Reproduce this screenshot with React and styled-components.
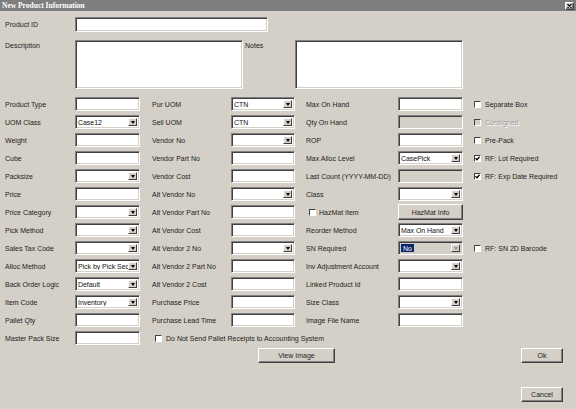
import styled, { createGlobalStyle, css } from 'styled-components'

const GlobalStyle = createGlobalStyle`
  html, body {
    margin: 0;
    background: #d4d0c8;
  }
  body {
    font-family: "Liberation Sans", Arial, sans-serif;
  }
`

const sunken = css`
  box-sizing: border-box;
  border: 1px solid;
  border-color: #808080 #ffffff #ffffff #808080;
  box-shadow: inset 1px 1px 0 #404040, inset -1px -1px 0 #d4d0c8;
`

const raised = css`
  box-sizing: border-box;
  border: 1px solid;
  border-color: #ffffff #404040 #404040 #ffffff;
  box-shadow: inset -1px -1px 0 #808080;
  background: #d4d0c8;
`

const Window = styled.div`
  width: 576px;
  height: 409px;
  background: #d4d0c8;
  overflow: hidden;
  display: flex;
  flex-direction: column;
`

const TitleBar = styled.div`
  height: 11px;
  flex-shrink: 0;
  background: #7e7e7e;
  display: flex;
  align-items: center;
  padding-left: 2px;
`

const Title = styled.span`
  font-family: "Liberation Serif", "Times New Roman", serif;
  font-weight: bold;
  font-size: 7.5px;
  line-height: 11px;
  color: #ffffff;
`

const CloseBtn = styled.div`
  ${raised};
  margin-left: auto;
  margin-right: 2px;
  width: 9px;
  height: 8px;
  display: flex;
  align-items: center;
  justify-content: center;
`

const Body = styled.div`
  padding: 6px 0 0 5px;
  font-size: 7px;
  color: #1c1c1c;
`

const Row = styled.div`
  display: flex;
  align-items: ${p => p.$top ? 'flex-start' : 'center'};
  margin-top: ${p => p.$mt || 0}px;
`

const Label = styled.div`
  width: ${p => p.$w}px;
  padding-left: ${p => p.$pad || 0}px;
  padding-top: ${p => p.$pt || 0}px;
  box-sizing: border-box;
  white-space: nowrap;
`

const TextBox = styled.input`
  ${sunken};
  width: ${p => p.$w ? p.$w + 'px' : '100%'};
  height: ${p => p.$h || 14}px;
  margin: 0;
  padding: 0 2px;
  background: ${p => p.disabled ? '#d4d0c8' : '#ffffff'};
  font: 7px "Liberation Sans", Arial, sans-serif;
  outline: none;
`

const TextArea = styled.textarea`
  ${sunken};
  width: 168px;
  height: 49px;
  margin: 0;
  padding: 2px;
  resize: none;
  background: #ffffff;
  font: 7px "Liberation Sans", Arial, sans-serif;
  outline: none;
`

const Combo = styled.div`
  ${sunken};
  width: 100%;
  height: 14px;
  padding: 2px 2px 2px 1px;
  display: flex;
  align-items: stretch;
  background: ${p => p.$disabled ? '#d4d0c8' : '#ffffff'};
`

const ComboText = styled.div`
  flex: 1;
  overflow: hidden;
  white-space: nowrap;
  line-height: 10px;
  padding-left: 1px;
  letter-spacing: -0.05px;
  color: #111;
`

const Selected = styled.span`
  background: #0a246a;
  color: #ffffff;
  padding: 0 2px;
  display: inline-block;
`

const ComboArrow = styled.div`
  box-sizing: border-box;
  border: 1px solid;
  border-color: #ffffff #404040 #404040 #ffffff;
  background: #d4d0c8;
  width: 9px;
  flex-shrink: 0;
  display: flex;
  align-items: center;
  justify-content: center;
`

const Triangle = styled.span`
  width: 0;
  height: 0;
  border-left: 2.5px solid transparent;
  border-right: 2.5px solid transparent;
  border-top: 3px solid ${p => p.$disabled ? '#909090' : '#000000'};
`

const Button = styled.button`
  ${raised};
  width: ${p => p.$w ? p.$w + 'px' : '100%'};
  height: ${p => p.$h || 15}px;
  margin: 0;
  padding: 0;
  font: 7px "Liberation Sans", Arial, sans-serif;
  color: #222;
`

const FormGrid = styled.div`
  display: grid;
  grid-template-columns: 70px 65px 91px 64px 103px 65px 1fr;
  grid-template-rows: repeat(14, 18px);
  align-items: center;
  margin-top: 6px;
`

const Cell = styled.div`
  padding-left: ${p => p.$pad || 0}px;
  white-space: nowrap;
  grid-column: ${p => p.$span || 'auto'};
`

const CheckLabel = styled.label`
  display: flex;
  align-items: center;
  gap: ${p => p.$gap ?? 4}px;
  color: ${p => p.$disabled ? '#9a9a9a' : '#1c1c1c'};
  text-shadow: ${p => p.$disabled ? '1px 1px 0 #ffffff' : 'none'};
`

const Box = styled.span`
  box-sizing: border-box;
  width: 7px;
  height: 7px;
  flex-shrink: 0;
  border: 1px solid;
  border-color: #404040 #ffffff #ffffff #404040;
  background: ${p => p.$disabled ? '#d4d0c8' : '#ffffff'};
  display: flex;
  align-items: center;
  justify-content: center;
`

const Footer = styled.div`
  display: flex;
  align-items: flex-start;
  margin-top: 1px;
  padding-left: 253px;
  padding-right: 13px;
`

const Actions = styled.div`
  margin-left: auto;
  display: flex;
  flex-direction: column;
  gap: 24px;
`

const Check = ({ label, checked, disabled, gap }) => (
  <CheckLabel $disabled={disabled} $gap={gap}>
    <Box $disabled={disabled}>
      {checked && (
        <svg width="5" height="5" viewBox="0 0 5 5">
          <polyline points="0.5,2.2 2,3.7 4.6,0.8" fill="none" stroke="#000" strokeWidth="1.3" />
        </svg>
      )}
    </Box>
    {label}
  </CheckLabel>
)

const Field = ({ kind, value }) => {
  if (kind === 'text') return <TextBox readOnly />
  if (kind === 'disabled') return <TextBox disabled />
  const disabled = kind === 'selected'
  return (
    <Combo $disabled={disabled}>
      <ComboText>{disabled ? <Selected>{value}</Selected> : value}</ComboText>
      <ComboArrow><Triangle $disabled={disabled} /></ComboArrow>
    </Combo>
  )
}

const rows = [
  [['Product Type', 'text'], ['Pur UOM', 'combo', 'CTN'], ['Max On Hand', 'text'], { label: 'Separate Box' }],
  [['UOM Class', 'combo', 'Case12'], ['Sell UOM', 'combo', 'CTN'], ['Qty On Hand', 'disabled'], { label: 'Consigned', disabled: true }],
  [['Weight', 'text'], ['Vendor No', 'combo'], ['ROP', 'text'], { label: 'Pre-Pack' }],
  [['Cube', 'text'], ['Vendor Part No', 'text'], ['Max Alloc Level', 'combo', 'CasePick'], { label: 'RF: Lot Required', checked: true }],
  [['Packsize', 'combo'], ['Vendor Cost', 'text'], ['Last Count (YYYY-MM-DD)', 'disabled'], { label: 'RF: Exp Date Required', checked: true }],
  [['Price', 'text'], ['Alt Vendor No', 'combo'], ['Class', 'combo'], null],
  [['Price Category', 'combo'], ['Alt Vendor Part No', 'text'], 'hazmat', null],
  [['Pick Method', 'combo'], ['Alt Vendor Cost', 'text'], ['Reorder Method', 'combo', 'Max On Hand'], null],
  [['Sales Tax Code', 'combo'], ['Alt Vendor 2 No', 'combo'], ['SN Required', 'selected', 'No'], { label: 'RF: SN 2D Barcode' }],
  [['Alloc Method', 'combo', 'Pick by Pick Sec'], ['Alt Vendor 2 Part No', 'text'], ['Inv Adjustment Account', 'combo'], null],
  [['Back Order Logic', 'combo', 'Default'], ['Alt Vendor 2 Cost', 'text'], ['Linked Product Id', 'text'], null],
  [['Item Code', 'combo', 'Inventory'], ['Purchase Price', 'text'], ['Size Class', 'combo'], null],
  [['Pallet Qty', 'text'], ['Purchase Lead Time', 'text'], ['Image File Name', 'text'], null],
  [['Master Pack Size', 'text'], 'pallet']
]

const pads = [0, 12, 11]

const renderRow = (row, r) => {
  const cells = []
  row.forEach((item, c) => {
    if (c === 3) {
      cells.push(
        <Cell key={`${r}-x`} $pad={11}>
          {item && <Check label={item.label} checked={item.checked} disabled={item.disabled} />}
        </Cell>
      )
      return
    }
    if (item === 'pallet') {
      cells.push(
        <Cell key={`${r}-p`} $pad={15} $span="3 / -1">
          <Check label="Do Not Send Pallet Receipts to Accounting System" />
        </Cell>
      )
      return
    }
    if (item === 'hazmat') {
      cells.push(<Cell key={`${r}-hl`} $pad={14}><Check label="HazMat Item" gap={3} /></Cell>)
      cells.push(<Cell key={`${r}-hb`}><Button $h={16}>HazMat Info</Button></Cell>)
      return
    }
    const [label, kind, value] = item
    cells.push(<Cell key={`${r}-${c}l`} $pad={pads[c]}>{label}</Cell>)
    cells.push(<Cell key={`${r}-${c}f`}><Field kind={kind} value={value} /></Cell>)
  })
  return cells
}

export default function App() {
  return (
    <>
      <GlobalStyle />
      <Window>
        <TitleBar>
          <Title>New Product Information</Title>
          <CloseBtn>
            <svg width="5" height="4" viewBox="0 0 5 4">
              <path d="M0.5 0 L4.5 4 M4.5 0 L0.5 4" stroke="#000" strokeWidth="1.1" />
            </svg>
          </CloseBtn>
        </TitleBar>
        <Body>
          <Row>
            <Label $w={70}>Product ID</Label>
            <TextBox readOnly $w={193} $h={15} />
          </Row>
          <Row $top $mt={8}>
            <Label $w={70} $pt={2}>Description</Label>
            <TextArea readOnly />
            <Label $w={52} $pad={2} $pt={2}>Notes</Label>
            <TextArea readOnly />
          </Row>
          <FormGrid>
            {rows.map(renderRow)}
          </FormGrid>
          <Footer>
            <Button $w={77}>View Image</Button>
            <Actions>
              <Button $w={42}>Ok</Button>
              <Button $w={42}>Cancel</Button>
            </Actions>
          </Footer>
        </Body>
      </Window>
    </>
  )
}
